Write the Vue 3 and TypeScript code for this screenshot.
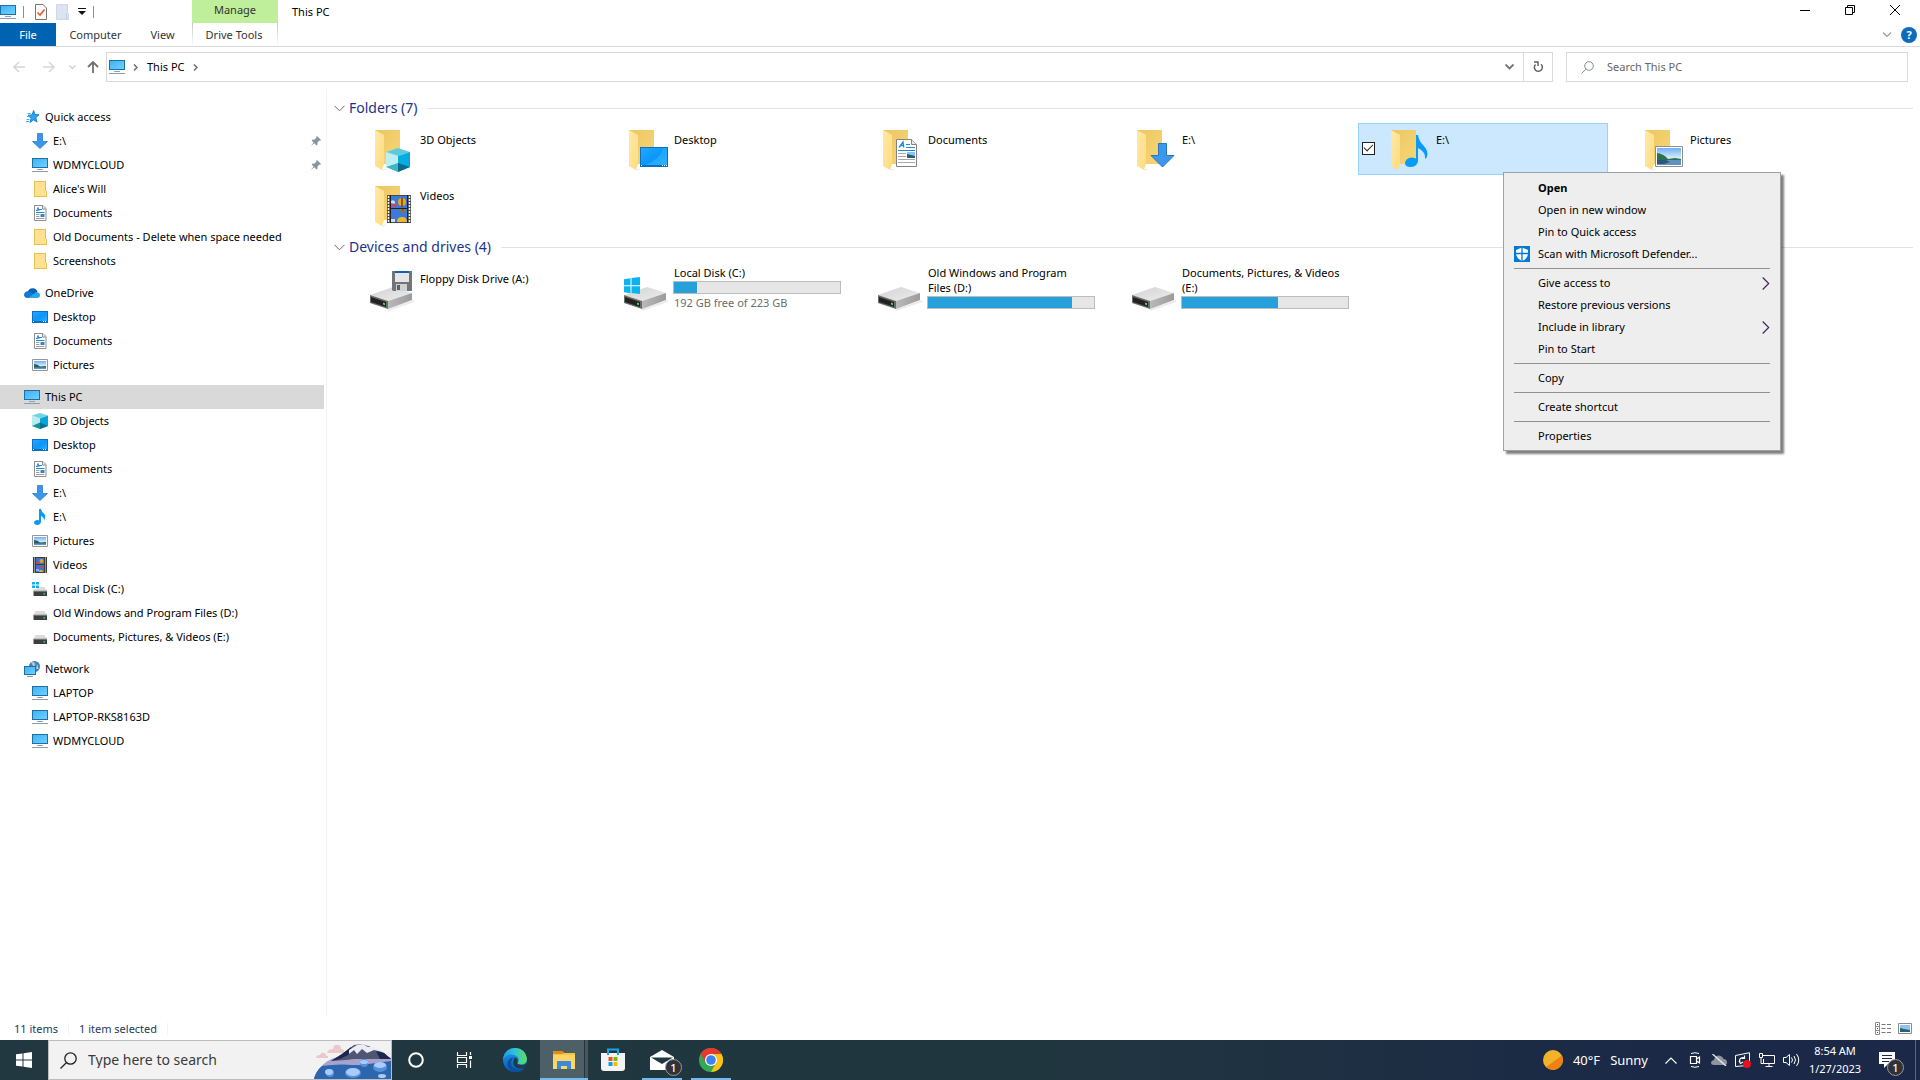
<script setup lang="ts">
interface NavItem { label: string; icon: string; pinned?: boolean }
interface NavGroup { label: string; icon: string; current?: boolean; items: NavItem[] }
interface Tile { label: string; overlay: string; selected?: boolean }
interface Drive { label: string; icon: string; used?: number; note?: string }
interface MenuEntry { label: string; strong?: boolean; icon?: string; submenu?: boolean }

const nav: NavGroup[] = [
  {
    label: 'Quick access', icon: 'star', items: [
      { label: 'E:\\', icon: 'down', pinned: true },
      { label: 'WDMYCLOUD', icon: 'pc', pinned: true },
      { label: "Alice's Will", icon: 'folder' },
      { label: 'Documents', icon: 'doc' },
      { label: 'Old Documents - Delete when space needed', icon: 'folder' },
      { label: 'Screenshots', icon: 'folder' },
    ],
  },
  {
    label: 'OneDrive', icon: 'cloud', items: [
      { label: 'Desktop', icon: 'desktop' },
      { label: 'Documents', icon: 'doc' },
      { label: 'Pictures', icon: 'picture' },
    ],
  },
  {
    label: 'This PC', icon: 'pc', current: true, items: [
      { label: '3D Objects', icon: 'cube' },
      { label: 'Desktop', icon: 'desktop' },
      { label: 'Documents', icon: 'doc' },
      { label: 'E:\\', icon: 'down' },
      { label: 'E:\\', icon: 'music' },
      { label: 'Pictures', icon: 'picture' },
      { label: 'Videos', icon: 'video' },
      { label: 'Local Disk (C:)', icon: 'disk-win' },
      { label: 'Old Windows and Program Files (D:)', icon: 'disk' },
      { label: 'Documents, Pictures, & Videos (E:)', icon: 'disk' },
    ],
  },
  {
    label: 'Network', icon: 'network', items: [
      { label: 'LAPTOP', icon: 'pc' },
      { label: 'LAPTOP-RKS8163D', icon: 'pc' },
      { label: 'WDMYCLOUD', icon: 'pc' },
    ],
  },
]

const folders: Tile[] = [
  { label: '3D Objects', overlay: 'cube' },
  { label: 'Desktop', overlay: 'desktop' },
  { label: 'Documents', overlay: 'doc' },
  { label: 'E:\\', overlay: 'down' },
  { label: 'E:\\', overlay: 'music', selected: true },
  { label: 'Pictures', overlay: 'picture' },
  { label: 'Videos', overlay: 'video' },
]

const drives: Drive[] = [
  { label: 'Floppy Disk Drive (A:)', icon: 'floppy' },
  { label: 'Local Disk (C:)', icon: 'win', used: 14, note: '192 GB free of 223 GB' },
  { label: 'Old Windows and Program Files (D:)', icon: 'plain', used: 87 },
  { label: 'Documents, Pictures, & Videos (E:)', icon: 'plain', used: 58 },
]

const menu: MenuEntry[][] = [
  [
    { label: 'Open', strong: true },
    { label: 'Open in new window' },
    { label: 'Pin to Quick access' },
    { label: 'Scan with Microsoft Defender...', icon: 'defender' },
  ],
  [
    { label: 'Give access to', submenu: true },
    { label: 'Restore previous versions' },
    { label: 'Include in library', submenu: true },
    { label: 'Pin to Start' },
  ],
  [{ label: 'Copy' }],
  [{ label: 'Create shortcut' }],
  [{ label: 'Properties' }],
]
</script>

<template>
  <div class="screen">
    <svg class="defs" width="0" height="0" aria-hidden="true">
      <defs>
        <linearGradient id="g-screen" x1="0" y1="0" x2="1" y2="1"><stop offset="0" stop-color="#3fb2f7" /><stop offset="1" stop-color="#6fd0ff" /></linearGradient>
        <linearGradient id="g-desk" x1="0" y1="0" x2="1" y2="1"><stop offset="0" stop-color="#22a8ff" /><stop offset=".55" stop-color="#0a97fa" /><stop offset="1" stop-color="#2fb0ff" /></linearGradient>
        <linearGradient id="g-back" x1="0" y1="0" x2="1" y2="1"><stop offset="0" stop-color="#edc564" /><stop offset="1" stop-color="#f8d775" /></linearGradient>
        <linearGradient id="g-flap" x1="0" y1="0" x2="1" y2="1"><stop offset="0" stop-color="#ffe9a8" /><stop offset="1" stop-color="#fddc80" /></linearGradient>
        <linearGradient id="g-sky" x1="0" y1="0" x2="0" y2="1"><stop offset="0" stop-color="#6fb0f5" /><stop offset=".55" stop-color="#cfe9fb" /><stop offset="1" stop-color="#e6f5ff" /></linearGradient>
        <linearGradient id="g-top" x1="0" y1="0" x2="1" y2="1"><stop offset="0" stop-color="#d2d2d2" /><stop offset="1" stop-color="#ededed" /></linearGradient>
        <linearGradient id="g-side" x1="0" y1="0" x2="1" y2="0"><stop offset="0" stop-color="#b9b9b9" /><stop offset="1" stop-color="#9c9c9c" /></linearGradient>
        <linearGradient id="g-edge" x1="0" y1="0" x2="1" y2="0"><stop offset="0" stop-color="#1b9be8" /><stop offset=".5" stop-color="#2fc4d8" /><stop offset="1" stop-color="#62dd55" /></linearGradient>
        <linearGradient id="g-edge2" x1="0" y1="0" x2="0" y2="1"><stop offset="0" stop-color="#1c9cea" /><stop offset="1" stop-color="#0b58b8" /></linearGradient>

        <symbol id="s-pc" viewBox="0 0 16 16"><path d="M0 1h16v10H0z" fill="#1f6f9f" /><path d="M1 2h14v8H1z" fill="url(#g-screen)" /><path d="M5 12h6v1H5z" fill="#8aa5bb" /><path d="M0 14h16v1H0z" fill="#8b9fb3" /></symbol>
        <symbol id="s-star" viewBox="0 0 16 16"><path d="M9.600 1.500 11 5.600l4 .2-3.200 2.700 1.200 4.600-3.500-2.300L6 13.500l1.200-4.200L4 6.300l4.100-.4z" fill="#2ea3f2" stroke="#1583d0" stroke-width="1" /><path d="M3.500 4.500h3M3 7.500h3M2.500 10.500h3M2 12.500h3" stroke="#3fa9ee" stroke-width="1" /></symbol>
        <symbol id="s-down" viewBox="0 0 16 16"><path d="M5.500.5h5v8h5L8 15.500.5 8.500h5z" fill="#3a96e8" stroke="#2d7fcb" stroke-width=".8" /></symbol>
        <symbol id="s-folder" viewBox="0 0 16 16"><path d="M2 0h12v10h1v6H2z" fill="#e6bf4e" /><path d="M3 1h10v14H3z" fill="#ffe291" /><path d="M13 10h1v5h-1z" fill="#fce9ae" /></symbol>
        <symbol id="s-doc" viewBox="0 0 16 16"><path d="M2.500.5h8.500l3 3v12H2.500z" fill="#fff" stroke="#8a8f94" /><path d="M10.500.5v3.500h3.500" fill="#e3e5e7" stroke="#8a8f94" /><path d="M4 5.500h2M7 4.500h3M4 7.500h8.500" stroke="#2585cf" /><path d="M4.500 6 6 2.500 7 6" stroke="#2585cf" fill="none" /><path d="M4 9.500h3.500M4 11.500h3.500M4 13.500h8.500" stroke="#9aa0a6" /><path d="M8.500 9h4v3h-4z" fill="#3a85a8" /></symbol>
        <symbol id="s-desktop" viewBox="0 0 16 16"><path d="M0 2h16v12H0z" fill="#0f6fc0" /><path d="M1 3h14v9H1z" fill="url(#g-desk)" /><path d="M1 12.500h1M11 12.500h1M13 12.500h1" stroke="#fff" /></symbol>
        <symbol id="s-picture" viewBox="0 0 16 16"><path d="M.5 2.500h15v11H.5z" fill="#fff" stroke="#969696" /><path d="M2 4h12v8H2z" fill="url(#g-sky)" /><path d="M2 7q4 0 6 2.500l6-.5v3H2z" fill="#285f5c" /><path d="M2 10.500h12V12H2z" fill="#5a9bd0" /></symbol>
        <symbol id="s-cube" viewBox="0 0 16 16"><path d="M8 0l8 2.500L8 5.500 0 2.500z" fill="#6fd3e3" /><path d="M0 2.500l8 3V16l-8-3z" fill="#b9ecef" /><path d="M16 2.500l-8 3V16l8-3z" fill="#07a4d6" /><path d="M0 13l8-3.500L8 16z" fill="#14939f" /><path d="M8 9.500 16 13l-8 3z" fill="#0b6f93" /></symbol>
        <symbol id="s-music" viewBox="0 0 16 16"><path d="M7 0h2q.6 3 3 4.600Q14.500 7 12 11.500q0-3.500-3-4.500v6q-.4 2.600-3.600 3Q2 16 2 13.600q.4-2.300 3.500-2.500L7 11.200z" fill="#0a9af5" /></symbol>
        <symbol id="s-video" viewBox="0 0 16 16"><path d="M1 0h14v16H1z" fill="#3c3c3c" /><path d="M2.500.5v15M13.500.5v15" stroke="#f1f1f1" stroke-dasharray="1 1" /><path d="M4 1h8v6H4z" fill="#3c75d4" /><path d="M4 8h8v7H4z" fill="#3c75d4" /><circle cx="9.500" cy="4" r="2" fill="#e2a41f" /><path d="M4 5h3v2H4zM8 9h3v1.500H8z" fill="#c24a5c" /><path d="M7 14q2-2 4 0v1H7z" fill="#e8b53a" /><path d="M4 12h3v2H4z" fill="#8db6ee" /></symbol>
        <symbol id="s-disk" viewBox="0 0 16 16"><path d="M3.500 6h9L15 10H1.500z" fill="#dcdcdc" /><path d="M1.500 10H15v5H1.500z" fill="#3b3f42" /><path d="M1.500 9.500H15v1H1.500z" fill="#a5a5a5" /><path d="M11.500 12h1.500v1.500h-1.500z" fill="#35d35a" /></symbol>
        <symbol id="s-disk-win" viewBox="0 0 16 16"><path d="M5 6h7.500L15 10H1.500V8H5z" fill="#dcdcdc" /><path d="M1.500 10H15v5H1.500z" fill="#3b3f42" /><path d="M1.500 9.500H15v1H1.500z" fill="#a5a5a5" /><path d="M11.500 12h1.500v1.500h-1.500z" fill="#35d35a" /><path d="M0 1h3v2.500H0zM4 1h3v2.500H4zM0 4.500h3V7H0zM4 4.500h3V7H4z" fill="#11aef0" /></symbol>
        <symbol id="s-cloud" viewBox="0 0 16 16"><path d="M3 8.500Q4.500 3 9 3.200q3.800.3 4.600 4L8 11z" fill="#0a64b8" /><path d="M3.500 13Q0 12.800 0 9.800 .3 6.500 4 6.300 6 6.300 8 8l5 5z" fill="#0f7ad3" /><path d="M4 13 12 7.300Q16 7.300 16 10.500 15.800 13 13.200 13z" fill="#28a6e8" /></symbol>
        <symbol id="s-network" viewBox="0 0 16 16"><circle cx="10.500" cy="5.500" r="5.500" fill="#3f82b5" /><path d="M7 1.500q3-1.500 4.500 1.500-.5 2-2 2.500zM13 3q1.500 2 1.500 5H12z" fill="#a8cbe2" /><path d="M0 5h12v9H0z" fill="#1f6f9f" /><path d="M1 6h10v7H1z" fill="url(#g-screen)" /><path d="M3 15.500h6" stroke="#8b9fb3" /></symbol>
        <symbol id="s-pin" viewBox="0 0 12 12"><path d="M7 1l4 4-1 .8-.6-.2L7.500 7.500l-.1 2.200-.9.700L4.300 8.300.8 11.300 3.700 7.600 1.600 5.500l.8-.8 2.200-.2L6.500 2.600 6.200 1.800z" fill="#8593a3" /></symbol>

        <symbol id="f-base" viewBox="0 0 48 48"><path d="M7 5h25v34H7z" fill="url(#g-back)" /><path d="M7 5l9 5v29l-2 6-7-4z" fill="url(#g-flap)" /><path d="M14 45l4-1" stroke="#e9e9e9" /></symbol>
        <symbol id="f-cube" viewBox="0 0 48 48"><path d="M30 23l12 4-12 4-12-4z" fill="#5acbe0" /><path d="M18 27l12 4v16l-12-5z" fill="#bdeef2" /><path d="M42 27l-12 4v16l12-5z" fill="#05aedd" /><path d="M18 42l12-4v9z" fill="#3fb5c4" /><path d="M30 38l12 4-12 5z" fill="#0a6c8c" /><path d="M40 28l2-1v15l-2-1z" fill="#129ef0" /></symbol>
        <symbol id="f-desktop" viewBox="0 0 48 48"><path d="M18 22h28v20H18z" fill="#0d70bf" /><path d="M19 23h26v17H19z" fill="url(#g-desk)" /><path d="M23 40q15-5 18-17h4v17z" fill="#2fb0ff" opacity=".6" /><path d="M19 40.500h1M40 40.500h1M42 40.500h1M44 40.500h1" stroke="#fff" /></symbol>
        <symbol id="f-doc" viewBox="0 0 48 48"><path d="M20.500 14.500h15l5 5v22h-20z" fill="#fff" stroke="#828282" /><path d="M35.500 14.500v5h5" fill="#e6e6e6" stroke="#828282" /><path d="M23 22.500 27 17l.8 5.500M24 20.500h3.500" fill="none" stroke="#2389d6" stroke-width="1.300" /><path d="M30 19.500h4M30 22.500h9M22 25.500h17" stroke="#2389d6" /><path d="M22 28.500h8M22 31.500h8M22 34.500h17M22 37.500h17" stroke="#a7a7a7" /><path d="M31 27h8v6h-8z" fill="#8fc2ee" /><path d="M31 29l8 2v2h-8z" fill="#245f70" /></symbol>
        <symbol id="f-down" viewBox="0 0 48 48"><path d="M28.500 18.500h8v12h7.500L32.500 42 21 30.500h7.500z" fill="#3b98ec" stroke="#2a77c0" /></symbol>
        <symbol id="f-music" viewBox="0 0 48 48"><path d="M32 10h2q1 6 5 10 6 6 4 12l-2 2q1-7-7-11v13q-.5 5.500-7 6-6 .2-6-4 .5-5 6.500-5.500 2 0 4.500 1z" fill="#0a9bf7" /></symbol>
        <symbol id="f-picture" viewBox="0 0 48 48"><path d="M17.500 21.500h27v20h-27z" fill="#fff" stroke="#8e8e8e" /><path d="M19 23h24v17H19z" fill="url(#g-sky)" /><path d="M19 28q7 1 11 6l7-1 6 1v2H19z" fill="#2d6f52" /><path d="M19 35h24v5H19z" fill="#5f93bd" /><path d="M19 35h9l4 2-6 2h-7z" fill="#2b5879" /></symbol>
        <symbol id="f-video" viewBox="0 0 48 48"><path d="M19 14h24v28H19z" fill="#4a4a4a" /><path d="M20.500 15v27M41.500 15v27" stroke="#f4f4f4" stroke-width="1.500" stroke-dasharray="2 1" /><path d="M23 15h16v12H23zM23 28h16v13H23z" fill="#3e78d8" /><path d="M22.500 14v28M39.500 14v28M22 27.500h18" stroke="#222" /><circle cx="34" cy="21" r="4" fill="#e6a817" /><path d="M34 17v9" stroke="#7c3a12" stroke-width="1.500" /><path d="M23 20q3-2 4 1t-4 1z" fill="#cfe0f7" /><path d="M23 23h6l-1 3h-5z" fill="#c8486b" /><path d="M31 28h7l-3 5z" fill="#49a043" /><path d="M33 28h3l-1 4z" fill="#d33" /><path d="M29 41q0-5 5-5t5 5z" fill="#efb52c" /><path d="M23 38h4v3h-4z" fill="#cfe0f7" /></symbol>

        <symbol id="d-plain" viewBox="0 0 48 48"><path d="M20 46l26-9" stroke="#ececec" stroke-width="2" /><path d="M2 31l23-8 19 6-24 8z" fill="url(#g-top)" /><path d="M20 37l24-8v7l-24 9z" fill="url(#g-side)" /><path d="M2 31l18 6v8L2 39z" fill="#6a6a6a" /><path d="M3 33l15 5v5L3 38z" fill="#222" /><path d="M15 38.500l2 .7v2l-2-.7z" fill="#3fe066" /></symbol>
        <symbol id="d-win" viewBox="0 0 48 48"><use href="#d-plain" /><path d="M2 15.300l6.500-1v7H2zM9.500 14.100 18 13v8.300H9.500zM2 22.300h6.500v7L2 28.300zM9.500 22.300H18V30l-8.500-1z" fill="#0bb4f0" /></symbol>
        <symbol id="d-floppy" viewBox="0 0 48 48"><use href="#d-plain" /><path d="M24 7h20v20H25l-1-1z" fill="#70757a" /><path d="M27 7h14v2H27z" fill="#0d62b4" /><path d="M27 9h14v9H27z" fill="#e6e6e6" /><path d="M28 20h11v7H28z" fill="#cfd1d3" /><path d="M29 21h3v5h-3z" fill="#5b6065" /></symbol>
        <symbol id="s-defender" viewBox="0 0 16 16"><path d="M0 0h16v16H0z" fill="#0078d7" /><path d="M8 1.500 14 4v3.500Q13.500 13 8 15 2.500 13 2 7.500V4z" fill="#fff" /><path d="M8 1v14M1.500 7.500h13" stroke="#0078d7" stroke-width="1.300" /></symbol>
      </defs>
    </svg>

    <header class="titlebar">
      <div class="quickbar">
        <svg width="16" height="16"><use href="#s-pc" /></svg>
        <i class="bar"></i>
        <button class="plain" aria-label="Properties"><svg width="12" height="16" viewBox="0 0 12 16"><path d="M.5.5H8l3.500 3.500v11.500H.5z" fill="#fbfbfb" stroke="#777" /><path d="M2.500 8.500 5 11l4.500-5.500" fill="none" stroke="#e4572a" stroke-width="1.600" /></svg></button>
        <button class="plain" aria-label="New folder"><svg width="13" height="16" viewBox="0 0 13 16"><path d="M.5.500h11v9h1v6H.5z" fill="#dde4f1" stroke="#cfd8e8" /><path d="M10.500 9.500v6" stroke="#c3cee2" /></svg></button>
        <button class="plain" aria-label="Customize Quick Access Toolbar"><svg width="8" height="7" viewBox="0 0 8 7"><path d="M0 .5h8" stroke="#111" /><path d="M0 3h8L4 7z" fill="#111" /></svg></button>
        <i class="bar"></i>
      </div>
      <div class="manage">Manage</div>
      <h1>This PC</h1>
      <div class="winctl">
        <button class="plain" aria-label="Minimize"><svg width="10" height="10"><path d="M0 5.500h10" stroke="#000" /></svg></button>
        <button class="plain" aria-label="Restore"><svg width="10" height="10"><path d="M2.500 2V.5h7v7H8M.5 2.500h7v7h-7z" fill="none" stroke="#000" /></svg></button>
        <button class="plain" aria-label="Close"><svg width="10" height="10"><path d="M0 0l10 10M10 0 0 10" stroke="#000" /></svg></button>
      </div>
    </header>

    <nav class="ribbon">
      <button class="file">File</button>
      <button class="tab computer">Computer</button>
      <button class="tab view">View</button>
      <button class="tab tools">Drive Tools</button>
      <div class="help">
        <button class="plain" aria-label="Expand the Ribbon"><svg width="10" height="6"><path d="M1 .5l4 4 4-4" fill="none" stroke="#9a9a9a" stroke-width="1.200" /></svg></button>
        <button class="ask" aria-label="Help">?</button>
      </div>
    </nav>

    <div class="address">
      <div class="arrows">
        <button class="plain" aria-label="Back"><svg width="12" height="12"><path d="M12 6H1M6 1 1 6l5 5" fill="none" stroke="#d6d6d6" stroke-width="1.500" /></svg></button>
        <button class="plain" aria-label="Forward"><svg width="12" height="12"><path d="M0 6h11M6 1l5 5-5 5" fill="none" stroke="#d6d6d6" stroke-width="1.500" /></svg></button>
        <button class="plain recent" aria-label="Recent locations"><svg width="7" height="5"><path d="M.5.500l3 3 3-3" fill="none" stroke="#d0d0d0" stroke-width="1.300" /></svg></button>
        <button class="plain" aria-label="Up"><svg width="12" height="12"><path d="M6 12V1M1 6l5-5 5 5" fill="none" stroke="#707070" stroke-width="1.800" /></svg></button>
      </div>
      <div class="path">
        <svg width="16" height="16"><use href="#s-pc" /></svg>
        <svg class="sep" width="5" height="7"><path d="M1 .5l3 3-3 3" fill="none" stroke="#6d6d6d" stroke-width="1.500" /></svg>
        <button class="crumb">This PC</button>
        <svg class="sep" width="5" height="7"><path d="M1 .5l3 3-3 3" fill="none" stroke="#6d6d6d" stroke-width="1.500" /></svg>
        <button class="plain drop" aria-label="Previous locations"><svg width="9" height="6"><path d="M.5.500l4 4 4-4" fill="none" stroke="#707070" stroke-width="1.800" /></svg></button>
        <button class="plain refresh" aria-label="Refresh"><svg width="11" height="12"><path d="M8 3.300a4 4 0 1 1-5.500.2M1 1h4v4" fill="none" stroke="#636363" stroke-width="1.500" /></svg></button>
      </div>
      <label class="search">
        <svg width="13" height="13"><circle cx="8" cy="5" r="4.300" fill="none" stroke="#848c93" /><path d="M5 8.200.5 12.500" stroke="#848c93" /></svg>
        <input type="text" placeholder="Search This PC" aria-label="Search This PC">
      </label>
    </div>

    <div class="body">
      <aside class="side">
        <div v-for="group in nav" :key="group.label" class="group">
          <a href="#" class="row head" :class="{ current: group.current }">
            <svg width="16" height="16"><use :href="'#s-' + group.icon" /></svg><span>{{ group.label }}</span>
          </a>
          <a v-for="(item, i) in group.items" :key="i" href="#" class="row">
            <svg width="16" height="16"><use :href="'#s-' + item.icon" /></svg><span>{{ item.label }}</span>
            <svg v-if="item.pinned" class="pin" width="12" height="12"><use href="#s-pin" /></svg>
          </a>
        </div>
      </aside>

      <main class="content">
        <section>
          <h2><svg width="11" height="7"><path d="M.5.800l5 5 5-5" fill="none" stroke="#6b6b6b" /></svg><span>Folders (7)</span></h2>
          <div class="tiles">
            <div v-for="(tile, i) in folders" :key="i" class="tile" :class="{ selected: tile.selected }">
              <span class="tick"><input v-if="tile.selected" type="checkbox" checked :aria-label="'Select ' + tile.label"></span>
              <svg width="48" height="48"><use href="#f-base" /><use :href="'#f-' + tile.overlay" /></svg>
              <div class="name">{{ tile.label }}</div>
              <div v-if="tile.selected" class="menu" role="menu">
                <div v-for="(entries, g) in menu" :key="g" class="block">
                  <button v-for="entry in entries" :key="entry.label" role="menuitem" class="entry" :class="{ strong: entry.strong }">
                    <span class="slot"><svg v-if="entry.icon" width="16" height="16"><use :href="'#s-' + entry.icon" /></svg></span>
                    <span>{{ entry.label }}</span>
                    <svg v-if="entry.submenu" class="more" width="8" height="13"><path d="M.7.500l6 6-6 6" fill="none" stroke="#43265c" stroke-width="1.200" /></svg>
                  </button>
                </div>
              </div>
            </div>
          </div>
        </section>
        <section>
          <h2><svg width="11" height="7"><path d="M.5.800l5 5 5-5" fill="none" stroke="#6b6b6b" /></svg><span>Devices and drives (4)</span></h2>
          <div class="tiles">
            <div v-for="drive in drives" :key="drive.label" class="tile">
              <span class="tick"></span>
              <svg width="48" height="48"><use :href="'#d-' + drive.icon" /></svg>
              <div class="name" :class="{ metered: drive.used }">
                <div class="label">{{ drive.label }}</div>
                <div v-if="drive.used" class="gauge"><div class="fill" :style="{ width: drive.used + '%' }"></div></div>
                <div v-if="drive.note" class="note">{{ drive.note }}</div>
              </div>
            </div>
          </div>
        </section>
      </main>
    </div>

    <footer class="status">
      <span>11 items</span><span>1 item selected</span>
      <div class="views">
        <button class="plain" aria-label="Details"><svg width="16" height="13"><path d="M.5.500h4v12h-4zM0 4.500h5M0 8.500h5" fill="none" stroke="#8a8a8a" /><path d="M2 2.500h1M2 6.500h1M2 10.500h1" stroke="#444" /><path d="M6.500 2.500h4M12 2.500h4M6.500 6.500h4M12 6.500h4M6.500 10.500h4M12 10.500h4" stroke="#777" /></svg></button>
        <button class="plain" aria-label="Large icons"><svg width="14" height="11"><path d="M.5.500h13v10H.5z" fill="#fff" stroke="#8a8a8a" /><path d="M2 2h10v7H2z" fill="#8cc4f5" /><path d="M2 5l4 1 6 1v2H2z" fill="#2a6070" /></svg></button>
      </div>
    </footer>

    <div class="taskbar">
      <button class="app start" aria-label="Start"><svg width="16" height="16"><path d="M0 2.300 6.500 1.400v6.100H0zM7.500 1.200 16 0v7.500H7.500zM0 8.500h6.500v6.100L0 13.700zM7.500 8.500H16V16l-8.500-1.200z" fill="#fff" /></svg></button>
      <label class="find">
        <svg width="17" height="17"><circle cx="10.500" cy="6.500" r="5.700" fill="none" stroke="#222" stroke-width="1.300" /><path d="M6.500 10.500.5 16.500" stroke="#222" stroke-width="1.300" /></svg>
        <input type="text" placeholder="Type here to search" aria-label="Type here to search">
        <svg class="scene" width="77" height="38" viewBox="0 0 77 38">
          <path d="M2 17q0-3 4-3 1-3 4-2 3 1 2 3h2v2zM13 12q1-4 6-4 1-5 5-4 3 0 3 4 4 0 3 4z" fill="#e9c9ca" />
          <path d="M0 38q3-13 20-20L46 9l31 8v21z" fill="#2d62a8" />
          <path d="M8 25q8-10 30-11l39 3v3l-30 4z" fill="#a6a3cf" />
          <path d="M17 20l11-7 12-9 8-1 12 4 10 5 7 6H40l-8 1z" fill="#4e5673" />
          <path d="M17 20l11-7 9-7q2 3-3 8l-8 4z" fill="#1a2753" />
          <path d="M35 9l8-5 6-1 5 3 6 0 8 5-8-2-7 3-5-4-5 5-3-4-5 4z" fill="#ececf2" />
          <path d="M62 10l8 2 7 6H66z" fill="#1b2750" />
          <path d="M40 24h37v4L50 26zM0 38q2-8 8-13 20-3 40 0l29-3v16z" fill="#2e66ae" />
          <g fill="#5590df"><ellipse cx="39" cy="32" rx="8" ry="5" /><ellipse cx="16" cy="32" rx="4" ry="4" /><ellipse cx="66" cy="26" rx="7" ry="5" /><ellipse cx="50" cy="22" rx="4" ry="4" /></g>
          <g fill="#a9cbfa"><ellipse cx="39" cy="31" rx="7" ry="4" /><ellipse cx="15" cy="31" rx="4" ry="3" /><ellipse cx="66" cy="24" rx="6" ry="3" /><ellipse cx="50" cy="21" rx="4" ry="2" /><ellipse cx="68" cy="35" rx="4" ry="2" /></g>
        </svg>
      </label>
      <button class="app" aria-label="Cortana"><svg width="18" height="18"><circle cx="9" cy="9" r="6.800" fill="none" stroke="#fff" stroke-width="2" /></svg></button>
      <button class="app" aria-label="Task View"><svg width="17" height="16"><path d="M1.500 0v3.500h9V0M1.500 16v-3.500h9V16M1.500 5.500h9v5h-9zM14.500 0v3M14.500 8.500V16" fill="none" stroke="#fff" stroke-width="1.200" /><path d="M13 4h3v3h-3z" fill="#fff" /></svg></button>
      <div class="pinned">
        <button class="app" aria-label="Microsoft Edge"><svg width="24" height="24"><circle cx="12" cy="12" r="12" fill="url(#g-edge2)" /><path d="M0 11Q2 0 12.500 0 22 .500 24 10.500q0 5.500-5.500 6-4.500-.2-4-2 2-2 .5-5Q12 6 7.500 6.500 2 7.500 0 12z" fill="url(#g-edge)" /><path d="M10.500 9.500q-5 5.500 0 10.500 4.500 3.500 11 .5-5 5.500-12 3-5.500-3-5-8.500 1-5 6-5.500z" fill="#0c4f9e" /><path d="M11.500 9.500q4 .5 3 4.500-1.500 3 5 3 3 0 4-2-.5 3-2 5-4 1.500-8 0-5.500-3.500-2-10.500z" fill="#213c47" /></svg></button>
        <button class="app active" aria-label="File Explorer"><svg width="22" height="19"><path d="M0 0h9l2 2h11v16H0z" fill="#f6c445" /><path d="M0 0h9l2 2-2 1H0z" fill="#e38b12" /><path d="M0 4h22v14H0z" fill="#fdd468" /><path d="M4 18v-7q0-1 1-1h12q1 0 1 1v7h-4v-3H8v3z" fill="#3a8ad8" /></svg></button>
        <button class="app" aria-label="Microsoft Store"><svg width="24" height="24"><path d="M7 6V1.500h10V6" fill="none" stroke="#16a5ee" stroke-width="2" /><path d="M0 5h24v15q0 3-3 3H3q-3 0-3-3z" fill="#f4f4f4" /><path d="M6 5h2v2H6zM16 5h2v2h-2z" fill="#16a5ee" /><path d="M7.500 9h4v4h-4z" fill="#f25022" /><path d="M12.500 9h4v4h-4z" fill="#7fba00" /><path d="M7.500 14h4v4h-4z" fill="#00a4ef" /><path d="M12.500 14h4v4h-4z" fill="#ffb900" /></svg></button>
        <button class="app open" aria-label="Mail"><svg width="24" height="20"><path d="M0 7 12 0l12 7v13H0z" fill="#fff" /><path d="M1 7.500h22L12 14z" fill="#223840" /></svg><b class="badge">1</b></button>
        <button class="app open" aria-label="Google Chrome"><svg width="24" height="24"><circle cx="12" cy="12" r="12" fill="#34a853" /><path d="M12 12 1.600 6A12 12 0 0 1 22.400 6z" fill="#e8392c" /><path d="M12 6h10.400A12 12 0 0 1 12 24l5-9z" fill="#fbc116" /><path d="M1.600 6 7 15l3-4V6z" fill="#e8392c" /><circle cx="12" cy="12" r="6" fill="#fff" /><circle cx="12" cy="12" r="4.800" fill="#3b82f0" /></svg></button>
      </div>

      <div class="tray">
        <button class="weather"><svg width="20" height="20"><circle cx="10" cy="10" r="10" fill="#f2b32b" /><path d="M19 5.600A10 10 0 0 1 3 17z" fill="#f07f14" /></svg><span>40°F</span><span>Sunny</span></button>
        <div class="icons">
          <button class="plain" aria-label="Show hidden icons"><svg width="12" height="7"><path d="M.5 6.500 6 1l5.500 5.500" fill="none" stroke="#fff" stroke-width="1.200" /></svg></button>
          <button class="plain" aria-label="Meet Now"><svg width="12" height="16"><path d="M1.500 4.500h6v7h-6zM7.500 7l3-2v6l-3-2" fill="none" stroke="#fff" stroke-width="1.200" /><path d="M2 1.500q4-1.500 8 0M2 14.500q4 1.500 8 0" fill="none" stroke="#fff" /></svg></button>
          <button class="plain" aria-label="OneDrive"><svg width="16" height="12"><path d="M3 11Q0 11 0 8.500 .5 6 3 6 4 1.500 8 1.500 11.500 2 12.500 5 16 5 16 8.500 16 11 13.500 11z" fill="#8e959f" /><path d="M1.500 0 15 12" stroke="#e9ebee" stroke-width="1.300" /></svg></button>
          <button class="plain" aria-label="Windows Update"><svg width="16" height="16"><path d="M.5 3.500 14.500.700v12.600L.5 14.500z" fill="none" stroke="#fff" /><path d="M5 10.500q-1.500-4 2.500-5l2.500.5M9.500 3.500v3h-3M4 9l1.500 2.500L8 10" fill="none" stroke="#fff" stroke-width="1.200" /><circle cx="12" cy="12" r="4" fill="#e81123" /></svg></button>
          <button class="plain" aria-label="Network"><svg width="16" height="14"><path d="M4 2.500h11.500v8H4.500V6M10 10.500v3M6.500 13.500h7" fill="none" stroke="#fff" /><path d="M.5.500h3v4h-3zM2 4.500v6h2.500" fill="none" stroke="#fff" /></svg></button>
          <button class="plain" aria-label="Volume"><svg width="17" height="14"><path d="M.5 4.500H3l3.500-3v11L3 9.500H.5z" fill="none" stroke="#fff" /><path d="M8.500 4.500q2 2.500 0 5M11 3q3 4 0 8M13.500 1q4.500 6 0 12" fill="none" stroke="#fff" /></svg></button>
        </div>
        <button class="clock"><span>8:54 AM</span><span>1/27/2023</span></button>
        <button class="app notes" aria-label="Notifications"><svg width="16" height="16"><path d="M0 0h16v12h-7l-4 4v-4H0z" fill="#fff" /><path d="M3 3.500h10M3 6.500h10M3 9.500h7" stroke="#1b2946" /></svg><b class="badge">1</b></button>
        <i class="peek"></i>
      </div>
    </div>
  </div>
</template>

<style>
body { margin: 0; }
</style>

<style scoped>
.screen {
  min-height: 100vh;
  display: flex;
  flex-direction: column;
  background: #fff;
  color: #000;
  font: 11px/16px "Noto Sans", "Open Sans", sans-serif;
}
.screen * { box-sizing: border-box; }
.defs { position: absolute; }
svg { display: block; flex: none; }
button { font: inherit; color: inherit; background: none; border: 0; padding: 0; margin: 0; }
.plain { display: flex; align-items: center; justify-content: center; }
a { color: inherit; text-decoration: none; }
input { font: inherit; color: inherit; border: 0; background: none; padding: 0; margin: 0; outline: 0; }

.titlebar { display: flex; height: 23px; }
.quickbar { width: 192px; display: flex; align-items: center; gap: 9px; }
.quickbar .bar { width: 1px; height: 12px; margin: 0 2px 0 -2px; background: #8f8f8f; }
.manage { width: 86px; line-height: 20px; text-align: center; background: #c0ef9b; color: #333; }
h1 { flex: 1; margin: 0 0 0 14px; font-size: 11px; font-weight: 400; line-height: 23px; }
.winctl { display: flex; height: 20px; padding-right: 3px; }
.winctl .plain { width: 45px; }

.ribbon { display: flex; height: 24px; border-bottom: 1px solid #dadada; color: #333; }
.file { width: 56px; background: #0063b1; color: #fff; }
.tab.computer { width: 79px; }
.tab.view { width: 55px; }
.tab.tools { width: 86px; margin-left: 2px; padding-right: 2px; border: solid; border-width: 0 1px; border-image: linear-gradient(#c4c4c4, #fff) 1; }
.help { margin-left: auto; display: flex; align-items: center; gap: 9px; padding-right: 3px; }
.ask { width: 16px; height: 16px; border-radius: 50%; background: #0f6cbd; color: #fff; font-weight: 700; line-height: 16px; }

.address { display: flex; padding: 5px 12px 0 0; height: 35px; }
.arrows { width: 106px; display: flex; align-items: center; padding-left: 13px; gap: 18px; }
.arrows .recent { margin: 0 -7px 0 -4px; }
.path { flex: 1; display: flex; align-items: center; border: 1px solid #d9d9d9; padding-left: 2px; }
.path .sep { margin: 0 9px 0 8px; }
.drop { margin-left: auto; width: 28px; }
.refresh { width: 29px; align-self: stretch; border-left: 1px solid #d9d9d9; }
.search { width: 342px; margin-left: 13px; display: flex; align-items: center; gap: 13px; padding-left: 14px; border: 1px solid #d9d9d9; }
.search input { flex: 1; }
.search input::placeholder { color: #666; opacity: 1; }

.body { flex: 1; display: flex; padding-top: 7px; }
.side { width: 327px; border-right: 1px solid #f3f3f3; padding-top: 16px; }
.group { margin-bottom: 8px; }
.row { display: flex; align-items: center; height: 24px; width: 324px; padding: 0 2px 0 32px; gap: 5px; white-space: nowrap; }
.row.head { padding-left: 24px; }
.row.current { background: #d9d9d9; }
.pin { margin: 0 0 0 auto; }

.content { flex: 1; padding: 8px 7px 0; }
h2 { display: flex; align-items: center; gap: 10px; height: 22px; margin: 0; font-size: 14px; font-weight: 400; color: #1e3287; }
h2 svg { margin-right: -6px; }
h2::after { content: ""; flex: 1; height: 1px; background: #e2e2e2; }
.tiles { display: flex; flex-wrap: wrap; gap: 4px; padding: 4px 0 5px 8px; }
.tile { position: relative; display: flex; width: 250px; height: 52px; padding: 1px 3px; border: 1px solid transparent; }
.tile.selected { background: #cce8ff; border-color: #99d1ff; }
.tick { flex: none; width: 22px; display: flex; align-items: center; padding-bottom: 2px; }
.tick input { appearance: none; width: 13px; height: 13px; border: 1px solid #222; background: #fff; display: grid; place-items: center; }
.tick input::before { content: ""; width: 8px; height: 4px; margin-bottom: 3px; border: solid #222; border-width: 0 0 1px 1px; transform: rotate(-45deg); }
.name { flex: 1; min-width: 0; padding: 7px 0 0 4px; }
.name.metered { padding-top: 1px; line-height: 15px; }
.label { max-width: 162px; }
.gauge { width: 168px; height: 13px; margin: 1px 0 0 -1px; background: #e6e6e6; border: 1px solid #bcbcbc; }
.fill { height: 100%; background: #26a0da; }
.note { color: #6d6d6d; line-height: 18px; }

.menu { position: absolute; z-index: 2; left: 144px; top: 48px; width: 278px; padding: 4px 10px 3px; border: 1px solid #a0a0a0; background: #eee; box-shadow: 3px 3px 2px rgba(0, 0, 0, .5); }
.block + .block { margin-top: 3px; padding-top: 3px; border-top: 1px solid #919191; }
.entry { display: flex; align-items: center; width: 100%; height: 22px; }
.entry.strong { font-weight: 700; }
.slot { width: 24px; }
.more { margin-left: auto; }

.status { display: flex; align-items: center; height: 24px; padding: 1px 8px 0 4px; color: #1e395b; }
.status span { padding: 0 10px; border-right: 1px solid #f3f3f3; line-height: 12px; }
.views { margin-left: auto; display: flex; align-items: center; gap: 7px; }

.taskbar { display: flex; height: 40px; background: linear-gradient(90deg, #213840, #20363f 55%, #1b2946 85%, #1b2848); color: #fff; }
.app { position: relative; width: 48px; height: 40px; display: flex; align-items: center; justify-content: center; }
.find { width: 344px; display: flex; align-items: center; gap: 11px; padding-left: 11px; background: #f2f2f2; border: 1px solid #bdbdbd; color: #333; font-size: 14px; }
.find input { flex: 1; min-width: 0; }
.find input::placeholder { color: #3a3a3a; opacity: 1; }
.pinned { display: flex; margin-left: 2px; }
.pinned .app { width: 49px; }
.app.active { background: linear-gradient(90deg, transparent 1px, #4d6067 1px, #4d6067 45px, #26343a 45px, #26343a 46px, #46565e 46px); }
.app.active::after, .app.open::after { content: ""; position: absolute; left: 5px; right: 4px; bottom: 0; height: 2px; background: #76b9ed; }
.app.active::after { left: 1px; right: 0; }
.badge { position: absolute; left: 28px; top: 19px; width: 17px; height: 17px; border: 1px solid #999; border-radius: 50%; background: #2f3337; line-height: 15px; text-align: center; font-weight: 500; }
.tray { margin-left: auto; display: flex; align-items: center; }
.weather { display: flex; align-items: center; gap: 10px; font-size: 13px; margin-right: 11px; }
.icons { display: flex; }
.icons .plain { width: 24px; height: 40px; }
.clock { display: flex; flex-direction: column; align-items: center; width: 64px; line-height: 18px; }
.notes { width: 40px; }
.notes .badge { left: 20px; }
.peek { width: 1px; height: 40px; margin: 0 4px 0 8px; background: #5b667c; }
</style>
